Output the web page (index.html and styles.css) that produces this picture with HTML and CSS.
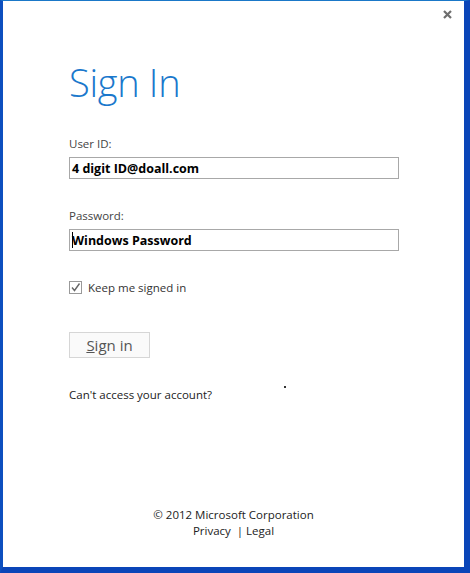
FILE: index.html
```html
<!DOCTYPE html>
<html lang="en">
<head>
    <meta charset="UTF-8">
    <meta name="viewport" content="width=device-width, initial-scale=1.0">
    <title>Sign In</title>
    <link rel="stylesheet" href="styles.css">
</head>
<body>
    <div class="window">
        <div class="title-bar">
            <span class="close-btn">
                <svg width="9" height="9" viewBox="0 0 9 9"><path d="M1 1 L8 8 M8 1 L1 8" stroke="#6e6e6e" stroke-width="2.2"/></svg>
            </span>
        </div>
        <div class="signin-container">
            <h1>Sign In</h1>
            <form id="signinForm">
                <div class="form-group">
                    <label for="userid">User ID:</label>
                    <div class="text-box">4 digit ID@doall.com</div>
                </div>
                <div class="form-group">
                    <label for="password">Password:</label>
                    <div class="text-box"><span class="caret"></span>Windows Password</div>
                </div>
                <div class="keep-signed">
                    <span class="check-box">
                        <svg width="11" height="11" viewBox="0 0 11 11"><path d="M2 5.5 L4.5 8.5 L9.5 1.5" fill="none" stroke="#666" stroke-width="1.4"/></svg>
                    </span>
                    <span>Keep me signed in</span>
                </div>
                <button type="button" class="signin-btn"><u>S</u>ign in</button>
            </form>
            <div class="cant-access">
                <span>Can't access your account?</span>
                <span class="dot"></span>
            </div>
        </div>
        <div class="footer">
            <div>&copy; 2012 Microsoft Corporation</div>
            <div>Privacy &nbsp;| Legal</div>
        </div>
    </div>
</body>
</html>
```

FILE: styles.css
```css
body {
    margin: 0;
    font-family: "Open Sans", "Noto Sans", sans-serif;
    background: #ffffff;
}
.window {
    width: 470px;
    height: 573px;
    box-sizing: border-box;
    border-top: 1px solid #1a78c8;
    border-left: 3px solid #0d4fbf;
    border-right: 6px solid #0a45b8;
    border-bottom: 6px solid #0a45b8;
    background: #ffffff;
    display: flex;
    flex-direction: column;
}
.title-bar {
    display: flex;
    justify-content: flex-end;
    height: 24px;
    padding-right: 12px;
}
.close-btn {
    margin-top: 9px;
    line-height: 0;
}
.signin-container {
    padding-left: 66px;
    padding-right: 65px;
    flex: 1;
}
h1 {
    font-weight: 300;
    font-size: 38px;
    line-height: 48px;
    color: #1a78cc;
    margin: 33px 0 0 0;
    letter-spacing: -0.3px;
}
form {
    margin-top: 30px;
}
.form-group {
    margin-bottom: 29px;
}
label {
    display: block;
    font-size: 11.5px;
    color: #444;
    line-height: 16px;
    margin-bottom: 5px;
}
.text-box {
    box-sizing: border-box;
    height: 22px;
    border: 1px solid #a8a8a8;
    padding-left: 2px;
    font-size: 12.5px;
    font-weight: bold;
    color: #000;
    line-height: 19px;
    display: flex;
    align-items: center;
}
.caret {
    width: 1px;
    height: 16px;
    background: #000;
    margin-right: -1px;
}
.keep-signed {
    display: flex;
    align-items: center;
    gap: 6px;
    font-size: 11.5px;
    color: #333;
    margin-top: 1px;
}
.check-box {
    box-sizing: border-box;
    width: 13px;
    height: 13px;
    border: 1px solid #999;
    display: flex;
    align-items: center;
    justify-content: center;
}
.signin-btn {
    margin-top: 37px;
    width: 81px;
    height: 26px;
    border: 1px solid #d6d6d6;
    background: #fafafa;
    color: #555;
    font-family: "Open Sans", "Noto Sans", sans-serif;
    font-size: 15px;
    padding: 0;
}
.cant-access {
    margin-top: 29px;
    font-size: 11.5px;
    color: #222;
    position: relative;
}
.dot {
    position: absolute;
    left: 215px;
    top: -1px;
    width: 2px;
    height: 2px;
    background: #333;
}
.footer {
    text-align: center;
    font-size: 11.5px;
    color: #222;
    line-height: 16px;
    padding-bottom: 28px;
}
```
